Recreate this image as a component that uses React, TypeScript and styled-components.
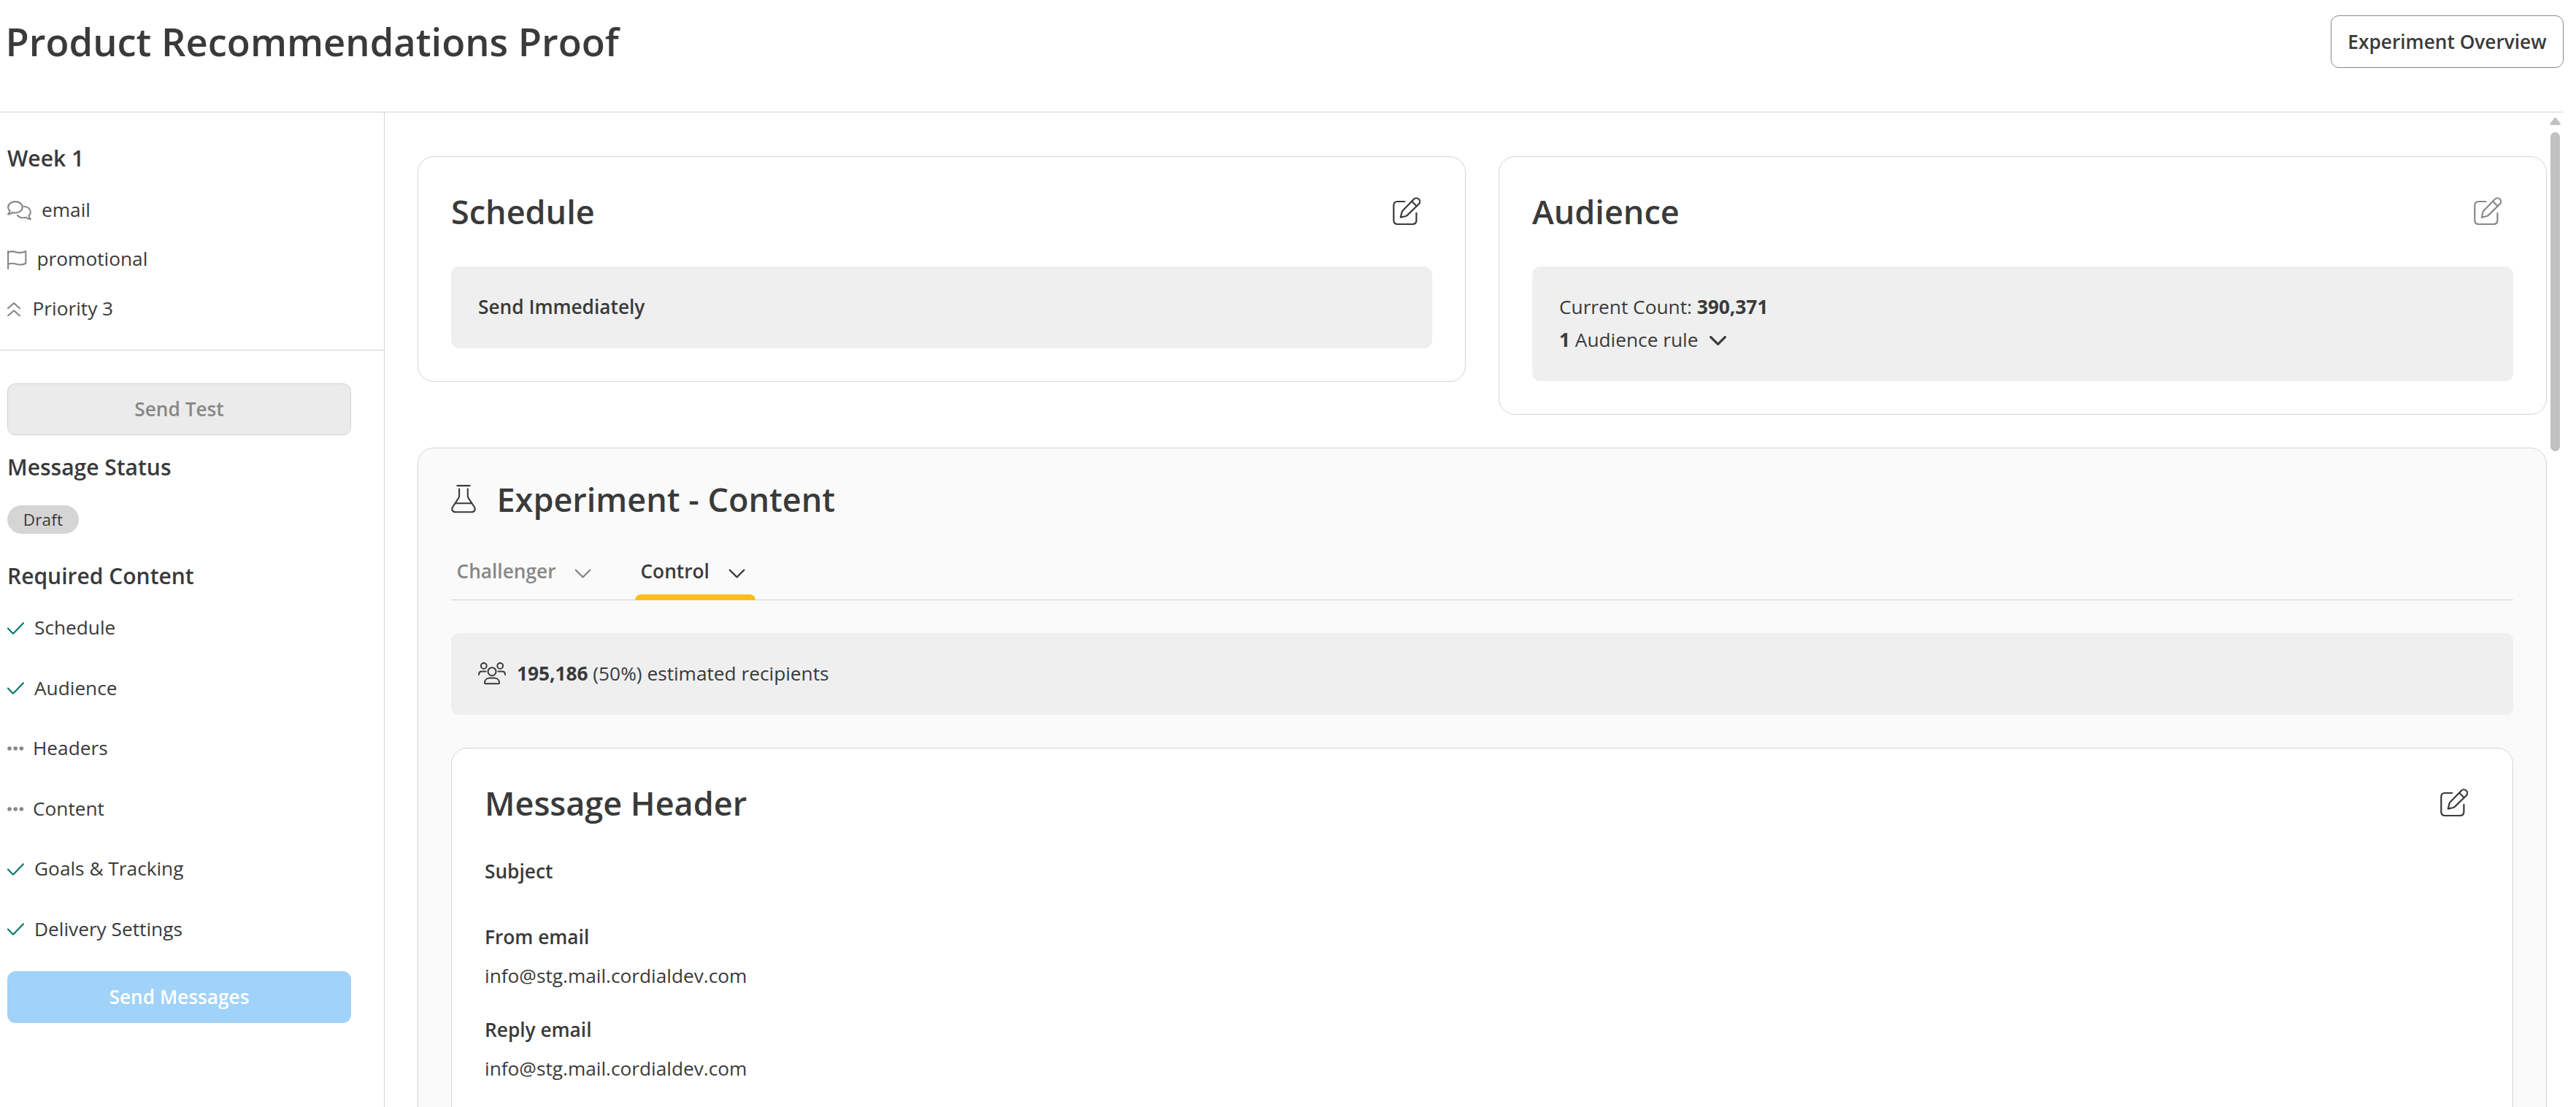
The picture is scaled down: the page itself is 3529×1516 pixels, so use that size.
import React from "react";
import styled, { createGlobalStyle } from "styled-components";

const ink = "#3a3a3a";
const muted = "#888888";
const line = "#d4d4d4";

const GlobalStyle = createGlobalStyle`
  * { box-sizing: border-box; }
  body {
    margin: 0;
    background: #fff;
    color: ${ink};
    font-family: "Open Sans", "Noto Sans", sans-serif;
    font-size: 26.25px;
    line-height: 45px;
  }
  h1, h2, h3 { margin: 0; font-weight: 600; }
  svg { display: block; flex: none; fill: none; stroke: currentColor; stroke-linecap: round; stroke-linejoin: round; }
`;

const Page = styled.div`
  display: flex;
  flex-direction: column;
  width: 3512px;
  height: 1516px;
  overflow: hidden;
`;

const Header = styled.header`
  display: flex;
  flex: none;
  align-items: center;
  justify-content: space-between;
  height: 154px;
  padding: 0 0 39px 7.5px;
  border-bottom: 1px solid ${line};
`;

const PageTitle = styled.h1`
  font-size: 52.5px;
  line-height: 72px;
`;

const Button = styled.button<{ $kind: "outline" | "muted" | "primary" }>`
  display: flex;
  align-items: center;
  justify-content: center;
  height: ${p => (p.$kind === "outline" ? 72 : 71)}px;
  width: ${p => (p.$kind === "outline" ? "319px" : "100%")};
  padding: 0;
  border-radius: 11px;
  border: 1px solid ${p => ({ outline: "#888", muted: line, primary: "#a1d2f9" })[p.$kind]};
  background: ${p => ({ outline: "#fff", muted: "#ebebeb", primary: "#a1d2f9" })[p.$kind]};
  color: ${p => ({ outline: ink, muted: muted, primary: "#fff" })[p.$kind]};
  font: 600 26.25px/45px "Open Sans", "Noto Sans", sans-serif;
`;

const Body = styled.div`
  display: flex;
  flex: 1;
  min-height: 0;
`;

const Sidebar = styled.aside`
  width: 527px;
  flex: none;
  border-right: 1px solid ${line};
`;

const Meta = styled.section`
  padding: 39.5px 0 23px 10px;
  border-bottom: 1px solid ${line};
`;

const SideHeading = styled.h3<{ $top?: number; $bottom?: number }>`
  margin: ${p => p.$top ?? 0}px 0 ${p => p.$bottom ?? 0}px;
  font-size: 30px;
  line-height: 45px;
`;

const MetaRow = styled.div<{ $gap: number }>`
  display: flex;
  align-items: center;
  gap: ${p => p.$gap}px;
  height: 67.5px;

  svg { margin-top: 2px; color: ${muted}; }
`;

const Actions = styled.section`
  padding: 45px 45px 0 10px;
`;

const Pill = styled.div`
  display: flex;
  align-items: center;
  justify-content: center;
  width: 98px;
  height: 39px;
  margin-top: 30.5px;
  border-radius: 20px;
  background: #d5d5d5;
  font-size: 22.5px;
  letter-spacing: 0.2px;
`;

const Checklist = styled.ul`
  list-style: none;
  margin: 7.25px 0 16.25px;
  padding: 0;
`;

const CheckItem = styled.li<{ $done: boolean }>`
  display: flex;
  align-items: center;
  gap: ${p => (p.$done ? 14 : 12)}px;
  height: 82.5px;

  svg { margin-top: 1.5px; color: ${p => (p.$done ? "#04766b" : muted)}; }
`;

const Main = styled.main`
  display: flex;
  flex: 1;
  flex-direction: column;
  gap: 45px;
  min-width: 0;
  padding: 60px 0 0 45px;
  overflow: hidden;
`;

const CardRow = styled.div`
  display: grid;
  flex: none;
  grid-template-columns: 1fr 1fr;
  align-items: start;
  gap: 45px;
`;

const Card = styled.section<{ $tint?: boolean; $top?: number }>`
  flex: none;
  margin-top: ${p => p.$top ?? 0}px;
  padding: 45px;
  border: 1px solid ${line};
  border-radius: 22px;
  background: ${p => (p.$tint ? "#fafafa" : "#fff")};
`;

const CardHead = styled.div<{ $bottom: number }>`
  display: flex;
  align-items: center;
  justify-content: space-between;
  height: 60px;
  margin-bottom: ${p => p.$bottom}px;
`;

const CardTitle = styled.h2`
  font-size: 45px;
  line-height: 60px;
`;

const EditButton = styled.span<{ $muted?: boolean }>`
  padding: 0 16px 2px 0;
  color: ${p => (p.$muted ? muted : ink)};
`;

const ExperimentHead = styled.div`
  display: flex;
  align-items: center;
  gap: 28.5px;
  height: 49px;
`;

const InfoBox = styled.div`
  padding: 33px 37px 34px;
  border-radius: 11px;
  background: #efefef;
`;

const InfoLine = styled.div<{ $gap?: number }>`
  display: flex;
  align-items: center;
  gap: ${p => p.$gap ?? 0}px;
  height: 45px;
  white-space: pre;
`;

const RuleToggle = styled(InfoLine)`
  svg { margin-top: 2px; }
`;

const Strong = styled.span<{ $w: number }>`
  font-weight: ${p => p.$w};
`;

const TabBar = styled.div`
  display: flex;
  gap: 45px;
  height: 79px;
  margin: 35px 0 45px;
  border-bottom: 1px solid ${line};
`;

const Tab = styled.div<{ $active?: boolean }>`
  position: relative;
  display: flex;
  align-items: center;
  gap: 26px;
  height: 78px;
  padding: 0 14.5px 0 7.5px;
  font-weight: 600;
  color: ${p => (p.$active ? ink : muted)};

  svg { margin-top: 6px; }

  &::after {
    content: "";
    position: absolute;
    left: 0;
    right: 0;
    bottom: -1px;
    height: 8px;
    border-radius: 8px 8px 0 0;
    background: ${p => (p.$active ? "#fbbc1e" : "transparent")};
  }
`;

const Field = styled.div`
  min-height: 61px;
  margin-bottom: 29px;
`;

const Label = styled.div`
  font-weight: 600;
`;

const Value = styled.div`
  margin-top: 8px;
`;

const ScrollGutter = styled.div`
  display: flex;
  flex: none;
  flex-direction: column;
  align-items: center;
  gap: 9px;
  width: 23px;
  padding: 6px 0 0;
`;

const ScrollThumb = styled.div`
  width: 13px;
  height: 437px;
  border-radius: 7px;
  background: #c1c1c1;
`;

const EditIcon = () => (
  <svg width="38.4" height="38.4" viewBox="0 0 38.4 38.4" strokeWidth="2.2">
    <path d="M16.3 6H6.5Q1.3 6 1.3 11.2V31.8Q1.3 37 6.5 37H27.2Q32.4 37 32.4 31.8V21.8" />
    <path d="M10.8 27.6L12.5 20.6Q12.8 19.5 13.6 18.6L28.9 2.7A4.7 4.7 0 0 1 35.7 9.5L19.8 24.9Q18.9 25.7 17.8 26Z" />
    <path d="M26.2 5.8L32.6 12.2" />
  </svg>
);

const CommentsIcon = () => (
  <svg width="33" height="26.5" viewBox="0 0 33 26.5" strokeWidth="2.1">
    <path d="M3.6 13.9C2 12.5 1.1 10.8 1.1 8.8C1.1 4.5 5.4 1.1 10.9 1.1S20.7 4.5 20.7 8.8S16.4 16.5 10.9 16.5C9.6 16.5 8.4 16.3 7.3 15.9C5.5 17.4 3.3 18.3 1 18.4C2.3 17.1 3.3 15.5 3.6 13.9Z" />
    <path d="M22.8 7.8C28 7.9 31.8 11.2 31.8 15.4C31.8 17.4 30.9 19.1 29.4 20.5C29.8 22.2 30.7 23.9 32 25.2C29.7 25.1 27.4 24.1 25.6 22.8C24.5 23.1 23.4 23.3 22.2 23.3C18.6 23.3 15.6 22 13.9 19.8" />
  </svg>
);

const FlagIcon = () => (
  <svg width="26.5" height="26" viewBox="0 0 26.5 26" strokeWidth="2.1">
    <path d="M1.1 1V25" />
    <path d="M1.1 2.6C5 1 8.3 .9 12 2.3C16.5 3.9 20.5 3.2 25.3 1.2V17.8C20.5 20 16.5 20.1 12 18.6C8.3 17.3 5 17.4 1.1 18.8" />
  </svg>
);

const PriorityIcon = () => (
  <svg width="18" height="19.5" viewBox="0 0 18 19.5" strokeWidth="2.1">
    <path d="M1 8.2L9 1.1L17 8.2M1 18.4L9 11.3L17 18.4" />
  </svg>
);

const CheckIcon = () => (
  <svg width="23" height="17" viewBox="0 0 23 17" strokeWidth="2.1">
    <path d="M.8 8.6L8 15.7L22 1.3" />
  </svg>
);

const DotsIcon = () => (
  <svg width="23" height="6" viewBox="0 0 23 6">
    <g fill="currentColor" stroke="none">
      <circle cx="3" cy="3" r="2.8" />
      <circle cx="11.2" cy="3" r="2.8" />
      <circle cx="19.4" cy="3" r="2.8" />
    </g>
  </svg>
);

const ChevronIcon = ({ weight }: { weight: number }) => (
  <svg width="23" height="13" viewBox="0 0 23 13" strokeWidth={weight}>
    <path d="M1.7 1.6L11.5 11.4L21.3 1.6" />
  </svg>
);

const FlaskIcon = () => (
  <svg width="34" height="38.5" viewBox="0 0 34 38.5" strokeWidth="2.1">
    <path d="M8.3 1.1H25.6" />
    <path d="M11.1 5.6V15.2Q11.1 16.6 10.3 17.8L2.2 30.3C0 33.8 2.1 37.3 6.2 37.3H27.8C31.9 37.3 34 33.8 31.8 30.3L23.6 17.8Q22.8 16.6 22.8 15.2V5.6" />
    <path d="M6 25.2H28" />
  </svg>
);

const PeopleIcon = () => (
  <svg width="38" height="30.5" viewBox="0 0 38 30.5" strokeWidth="2">
    <circle cx="7.8" cy="4.9" r="3.9" />
    <circle cx="30.2" cy="4.9" r="3.9" />
    <circle cx="19" cy="12.7" r="5.5" />
    <path d="M1.1 17V16Q1.4 12.5 5 12.5H10.6M27.4 12.5H33Q36.6 12.5 36.9 16V17" />
    <path d="M8.9 27.8C9.2 24 12.3 21.6 16 21.6H22C25.7 21.6 28.8 24 29.1 27.8Q29.2 29.3 27.8 29.3H10.2Q8.8 29.3 8.9 27.8Z" />
  </svg>
);

const ScrollArrow = () => (
  <svg width="15" height="12" viewBox="0 0 15 12">
    <path d="M7.5 2L13.5 10H1.5Z" fill="#c1c1c1" stroke="#c1c1c1" strokeWidth="2.6" />
  </svg>
);

const checklist = [
  { label: "Schedule", done: true },
  { label: "Audience", done: true },
  { label: "Headers", done: false },
  { label: "Content", done: false },
  { label: "Goals & Tracking", done: true },
  { label: "Delivery Settings", done: true },
];

const headerFields = [
  { label: "Subject", value: "" },
  { label: "From email", value: "info@stg.mail.cordialdev.com" },
  { label: "Reply email", value: "info@stg.mail.cordialdev.com" },
];

export default function App() {
  return (
    <>
      <GlobalStyle />
      <Page>
        <Header>
          <PageTitle>Product Recommendations Proof</PageTitle>
          <Button $kind="outline">Experiment Overview</Button>
        </Header>
        <Body>
          <Sidebar>
            <Meta>
              <SideHeading $bottom={15}>Week 1</SideHeading>
              <MetaRow $gap={14}><CommentsIcon />email</MetaRow>
              <MetaRow $gap={14}><FlagIcon />promotional</MetaRow>
              <MetaRow $gap={16.5}><PriorityIcon />Priority 3</MetaRow>
            </Meta>
            <Actions>
              <Button $kind="muted">Send Test</Button>
              <SideHeading $top={20.5}>Message Status</SideHeading>
              <Pill>Draft</Pill>
              <SideHeading $top={35}>Required Content</SideHeading>
              <Checklist>
                {checklist.map(item => (
                  <CheckItem key={item.label} $done={item.done}>
                    {item.done ? <CheckIcon /> : <DotsIcon />}
                    {item.label}
                  </CheckItem>
                ))}
              </Checklist>
              <Button $kind="primary">Send Messages</Button>
            </Actions>
          </Sidebar>
          <Main>
            <CardRow>
              <Card>
                <CardHead $bottom={45}>
                  <CardTitle>Schedule</CardTitle>
                  <EditButton><EditIcon /></EditButton>
                </CardHead>
                <InfoBox>
                  <InfoLine><Strong $w={600}>Send Immediately</Strong></InfoLine>
                </InfoBox>
              </Card>
              <Card>
                <CardHead $bottom={45}>
                  <CardTitle>Audience</CardTitle>
                  <EditButton $muted><EditIcon /></EditButton>
                </CardHead>
                <InfoBox>
                  <InfoLine>Current Count: <Strong $w={700}>390,371</Strong></InfoLine>
                  <RuleToggle $gap={15.5}>
                    <span><Strong $w={700}>1</Strong> Audience rule</span>
                    <ChevronIcon weight={3.2} />
                  </RuleToggle>
                </InfoBox>
              </Card>
            </CardRow>
            <Card $tint>
              <ExperimentHead>
                <FlaskIcon />
                <CardTitle>Experiment - Content</CardTitle>
              </ExperimentHead>
              <TabBar>
                <Tab>Challenger<ChevronIcon weight={2.2} /></Tab>
                <Tab $active>Control<ChevronIcon weight={2.2} /></Tab>
              </TabBar>
              <InfoBox>
                <InfoLine $gap={15}>
                  <PeopleIcon />
                  <span><Strong $w={700}>195,186</Strong> (50%) estimated recipients</span>
                </InfoLine>
              </InfoBox>
              <Card $top={45}>
                <CardHead $bottom={41}>
                  <CardTitle>Message Header</CardTitle>
                  <EditButton><EditIcon /></EditButton>
                </CardHead>
                {headerFields.map(field => (
                  <Field key={field.label}>
                    <Label>{field.label}</Label>
                    {field.value && <Value>{field.value}</Value>}
                  </Field>
                ))}
              </Card>
            </Card>
          </Main>
          <ScrollGutter>
            <ScrollArrow />
            <ScrollThumb />
          </ScrollGutter>
        </Body>
      </Page>
    </>
  );
}
